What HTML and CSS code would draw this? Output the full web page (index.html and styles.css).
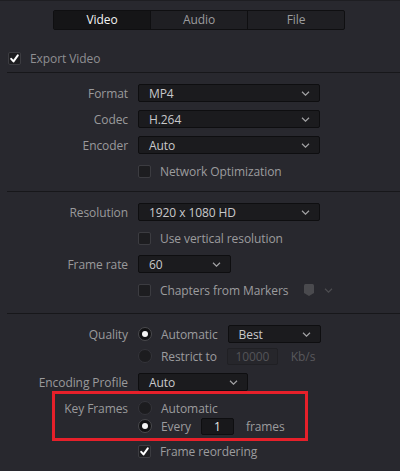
FILE: index.html
```html
<!DOCTYPE html>
<html>
<head>
<meta charset="utf-8">
<link rel="stylesheet" href="styles.css">
</head>
<body>
<div class="panel">
  <div class="tabs">
    <div class="tab active">Video</div>
    <div class="tab">Audio</div>
    <div class="tab">File</div>
  </div>

  <div class="export">
    <span class="cb checked"><svg viewBox="0 0 11 11"><path d="M2.2 5.8 L4.5 8.4 L8.8 2.4"/></svg></span>
    <span class="export-label">Export Video</span>
  </div>

  <div class="sep"></div>
  <div class="section s1">
    <div class="row">
      <div class="lbl">Format</div>
      <div class="dd w-wide"><span>MP4</span><svg class="chev" viewBox="0 0 9 5"><path d="M1 0.8 L4.5 4.2 L8 0.8"/></svg></div>
    </div>
    <div class="row">
      <div class="lbl">Codec</div>
      <div class="dd w-wide"><span>H.264</span><svg class="chev" viewBox="0 0 9 5"><path d="M1 0.8 L4.5 4.2 L8 0.8"/></svg></div>
    </div>
    <div class="row">
      <div class="lbl">Encoder</div>
      <div class="dd w-wide"><span>Auto</span><svg class="chev" viewBox="0 0 9 5"><path d="M1 0.8 L4.5 4.2 L8 0.8"/></svg></div>
    </div>
    <div class="row">
      <div class="lbl"></div>
      <div class="check"><span class="cb"></span><span class="opt">Network Optimization</span></div>
    </div>
  </div>

  <div class="sep"></div>
  <div class="section s2">
    <div class="row">
      <div class="lbl">Resolution</div>
      <div class="dd w-wide"><span>1920 x 1080 HD</span><svg class="chev" viewBox="0 0 9 5"><path d="M1 0.8 L4.5 4.2 L8 0.8"/></svg></div>
    </div>
    <div class="row">
      <div class="lbl"></div>
      <div class="check"><span class="cb"></span><span class="opt">Use vertical resolution</span></div>
    </div>
    <div class="row">
      <div class="lbl">Frame rate</div>
      <div class="dd w-rate"><span>60</span><svg class="chev" viewBox="0 0 9 5"><path d="M1 0.8 L4.5 4.2 L8 0.8"/></svg></div>
    </div>
    <div class="row">
      <div class="lbl"></div>
      <div class="check"><span class="cb"></span><span class="opt">Chapters from Markers</span>
        <svg class="marker" viewBox="0 0 10 12"><path d="M0 1.5 Q0 0 1.5 0 L8.5 0 Q10 0 10 1.5 L10 9 L5 12 L0 9 Z"/></svg>
        <svg class="chev dim" viewBox="0 0 9 5"><path d="M1 0.8 L4.5 4.2 L8 0.8"/></svg>
      </div>
    </div>
  </div>

  <div class="sep"></div>
  <div class="section s3">
    <div class="row r22">
      <div class="lbl">Quality</div>
      <span class="radio on"></span><span class="opt radio-text">Automatic</span>
      <div class="dd w-best"><span>Best</span><svg class="chev" viewBox="0 0 9 5"><path d="M1 0.8 L4.5 4.2 L8 0.8"/></svg></div>
    </div>
    <div class="row r22">
      <div class="lbl"></div>
      <span class="radio"></span><span class="opt radio-text">Restrict to</span>
      <div class="num disabled">10000</div>
      <span class="unit">Kb/s</span>
    </div>
    <div class="row r18 enc">
      <div class="lbl">Encoding Profile</div>
      <div class="dd w-prof"><span>Auto</span><svg class="chev" viewBox="0 0 9 5"><path d="M1 0.8 L4.5 4.2 L8 0.8"/></svg></div>
    </div>

    <div class="keyframes">
      <div class="row r18">
        <div class="lbl kf">Key Frames</div>
        <span class="radio"></span><span class="opt radio-text">Automatic</span>
      </div>
      <div class="row r18">
        <div class="lbl kf"></div>
        <span class="radio on"></span><span class="opt radio-text every">Every</span>
        <div class="num every-box">1</div>
        <span class="opt">frames</span>
      </div>
    </div>

    <div class="row r21">
      <div class="lbl"></div>
      <div class="check"><span class="cb checked"><svg viewBox="0 0 11 11"><path d="M2.2 5.8 L4.5 8.4 L8.8 2.4"/></svg></span><span class="opt">Frame reordering</span></div>
    </div>
  </div>
</div>
</body>
</html>
```

FILE: styles.css
```css
* { box-sizing: border-box; }

html, body {
  margin: 0;
  padding: 0;
  background: #28282e;
}

body {
  font-family: "Open Sans", "Noto Sans", sans-serif;
  font-size: 12px;
  letter-spacing: -0.08px;
  color: #9a9a9c;
  width: 400px;
  height: 471px;
  overflow: hidden;
}

.panel {
  border-top: 1px solid #1e1e22;
  height: 471px;
}

/* Tabs */
.tabs {
  display: flex;
  margin: 9px 0 0 53px;
  width: 292px;
  height: 20px;
  border: 1px solid #0f0f11;
  border-radius: 2px;
  background: #1f1f23;
}

.tab {
  flex: 1;
  display: flex;
  align-items: center;
  justify-content: center;
  color: #9c9c9e;
  border-left: 1px solid #0f0f11;
  line-height: 1;
}

.tab:first-child { border-left: none; }

.tab.active {
  background: #151517;
  color: #f2f2f2;
}

/* Export row */
.export {
  display: flex;
  align-items: center;
  height: 20px;
  margin-top: 18px;
  padding-left: 8px;
}

.export-label {
  margin-left: 9px;
  color: #8f8f92;
}

.sep {
  height: 1px;
  background: #17171a;
  margin-left: 7px;
}

.export + .sep { margin-top: 4px; }

.section.s1 { padding: 7px 0 7px; }
.section.s2 { padding: 7px 0 10px; }
.section.s3 { padding: 9px 0 0; }

.row {
  display: flex;
  align-items: center;
  height: 26px;
}

.row.r22 { height: 22px; }
.row.r18 { height: 18px; }
.row.r21 { height: 21px; }
.row.enc { margin-top: 6px; }

.lbl {
  width: 128px;
  flex: none;
  text-align: right;
  margin-right: 10px;
  color: #9a9a9c;
  white-space: nowrap;
}

.lbl.kf { width: 73px; }

/* Dropdown */
.dd {
  display: flex;
  align-items: center;
  justify-content: space-between;
  height: 18px;
  padding: 0 9px 0 10px;
  background: #1b1b1e;
  border: 1px solid #0e0e10;
  border-radius: 2px;
  color: #c9c9cb;
}

.w-wide { width: 182px; }
.w-rate { width: 93px; }
.w-best { width: 93px; margin-left: 10px; }
.w-prof { width: 110px; }

.chev {
  width: 9px;
  height: 5px;
  fill: none;
  stroke: #a2a2a4;
  stroke-width: 1.2;
}

.chev.dim {
  stroke: #4c4c50;
  margin-left: 10px;
}

.marker {
  width: 10px;
  height: 12px;
  fill: #4a4a4e;
  margin-left: 16px;
}

/* Checkbox */
.check {
  display: flex;
  align-items: center;
}

.cb {
  width: 13px;
  height: 13px;
  flex: none;
  background: #1d1d20;
  border: 1px solid #3c3c41;
  border-radius: 2px;
  display: inline-flex;
}

.cb svg {
  width: 11px;
  height: 11px;
  fill: none;
  stroke: #ffffff;
  stroke-width: 2;
  stroke-linecap: round;
  stroke-linejoin: round;
}

.check .opt { margin-left: 9px; }

.opt { color: #9c9c9e; }

/* Radio */
.radio {
  width: 14px;
  height: 14px;
  flex: none;
  border-radius: 50%;
  background: #1c1c1f;
  border: 1px solid #34343a;
  position: relative;
}

.radio.on {
  background: #111113;
  border: 1px solid #4a4a4e;
}

.radio.on::after {
  content: "";
  position: absolute;
  left: 3px;
  top: 3px;
  width: 6px;
  height: 6px;
  border-radius: 50%;
  background: #f4f4f4;
}

.radio-text {
  margin-left: 9px;
}

.num {
  display: flex;
  align-items: center;
  justify-content: center;
  height: 17px;
  border-radius: 2px;
}

.num.disabled {
  width: 51px;
  margin-left: 10px;
  border: 1px solid #202024;
  background: #26262b;
  color: #545458;
}

.unit {
  margin-left: 13px;
  color: #58585c;
}

.every-box {
  width: 33px;
  margin-left: 10px;
  margin-right: 12px;
  background: #18181b;
  border: 1px solid #0e0e10;
  color: #e6e6e6;
}

/* Red annotation box */
.keyframes {
  margin-left: 52px;
  width: 256px;
  border: 3px solid #e6202a;
  padding: 5px 0 3px;
}
```
